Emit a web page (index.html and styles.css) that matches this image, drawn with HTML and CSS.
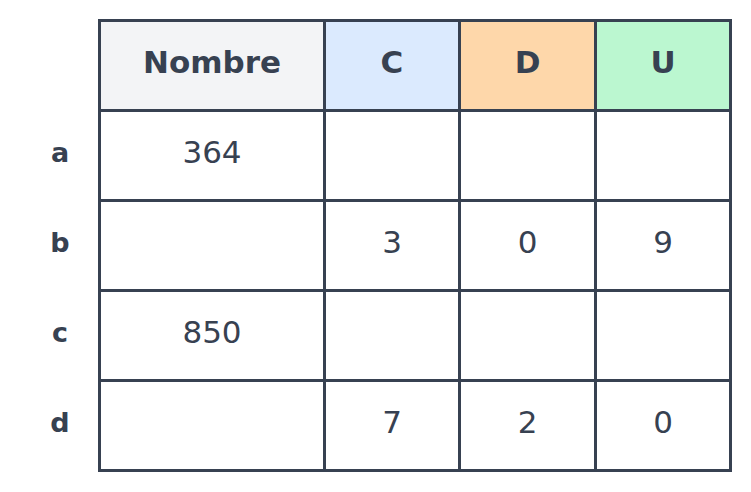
FILE: index.html
```html
<!DOCTYPE html>
<html>
<head>
<meta charset="utf-8">
<link rel="stylesheet" href="styles.css">
</head>
<body>
<div class="wrap">
  <div class="labels">
    <div class="label"></div>
    <div class="label">a</div>
    <div class="label">b</div>
    <div class="label">c</div>
    <div class="label">d</div>
  </div>
  <div class="grid">
    <div class="cell head h-n">Nombre</div>
    <div class="cell head h-c">C</div>
    <div class="cell head h-d">D</div>
    <div class="cell head h-u">U</div>

    <div class="cell">364</div>
    <div class="cell"></div>
    <div class="cell"></div>
    <div class="cell"></div>

    <div class="cell"></div>
    <div class="cell">3</div>
    <div class="cell">0</div>
    <div class="cell">9</div>

    <div class="cell">850</div>
    <div class="cell"></div>
    <div class="cell"></div>
    <div class="cell"></div>

    <div class="cell"></div>
    <div class="cell">7</div>
    <div class="cell">2</div>
    <div class="cell">0</div>
  </div>
</div>
</body>
</html>
```

FILE: styles.css
```css
html, body {
  margin: 0;
  padding: 0;
  background: #ffffff;
}

body {
  font-family: "DejaVu Sans", sans-serif;
  color: #374151;
}

.wrap {
  display: flex;
  padding-top: 19px;
}

.labels {
  width: 76px;
  margin-left: 22px;
  display: grid;
  grid-template-rows: repeat(5, 87px);
  row-gap: 3px;
  padding: 3px 0;
}

.label {
  display: flex;
  align-items: center;
  justify-content: center;
  font-weight: bold;
  font-size: 27px;
  padding-bottom: 6px;
  box-sizing: border-box;
}

.grid {
  display: grid;
  grid-template-columns: 222px 132px 133px 132px;
  grid-template-rows: repeat(5, 87px);
  gap: 3px;
  padding: 3px;
  background: #374151;
}

.cell {
  background: #ffffff;
  display: flex;
  align-items: center;
  justify-content: center;
  font-size: 31px;
  padding-bottom: 8px;
  box-sizing: border-box;
}

.head {
  font-weight: bold;
}

.h-n { background: #f3f4f6; }
.h-c { background: #dbeafe; }
.h-d { background: #fed7aa; }
.h-u { background: #bbf7d0; }
```
